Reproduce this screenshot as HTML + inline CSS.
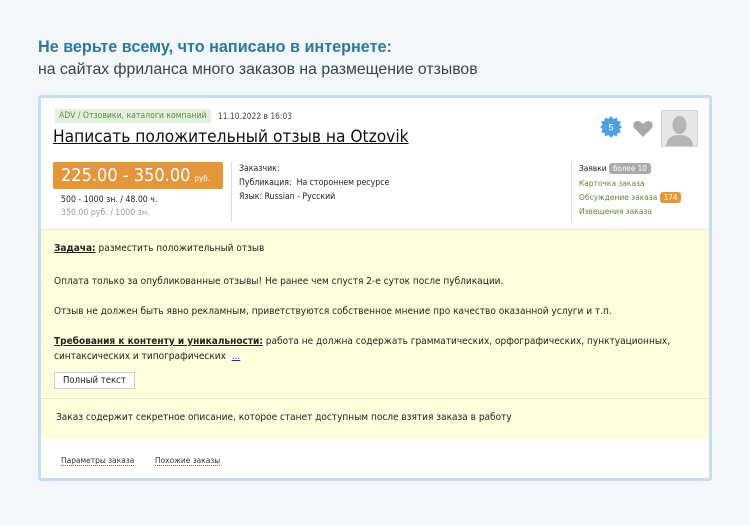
<!DOCTYPE html>
<html><head><meta charset="utf-8"><style>
*{margin:0;padding:0;box-sizing:border-box}
body{width:750px;height:525px;background:#f3f7fa;font-family:"DejaVu Sans Condensed","DejaVu Sans","Liberation Sans",sans-serif;font-stretch:condensed;position:relative;overflow:hidden;color:#222}
.h1{position:absolute;left:38px;top:38px;font:bold 16.2px "Liberation Sans",sans-serif;color:#2a7aa0}
.h2{position:absolute;left:38px;top:61px;font:15.8px "Liberation Sans",sans-serif;color:#34434e}
.card{position:absolute;left:38px;top:95px;width:674px;height:386px;border:3px solid #c5ddf2;border-radius:3px;background:#fff}
.a{position:absolute;white-space:nowrap}
.s{font-size:8.7px}
.r{font-size:8.3px}
.t{font-size:10px}
.tag{left:14px;top:11px;background:#e3f2dc;color:#5d8a4a;padding:2px 4px;font-size:8.6px}
.date{left:177px;top:13px;font-size:8.4px;color:#444}
.title{left:12px;top:29px;font-size:17.2px;text-decoration:underline;color:#111}
.price{left:12px;top:64px;width:170px;height:27px;background:#e3963a;border-radius:2px;color:#fff;font-size:18px;padding:3px 0 0 8px}
.price small{font-size:8px;margin-left:4px}
.sep{position:absolute;width:1px;background:#ddd}
.green{color:#5b8a3a}
.badge{display:inline-block;padding:0 4px;border-radius:3px;color:#fff;font-size:8px;line-height:11px}
.yellow{position:absolute;left:0;top:131px;width:668px;height:210px;background:#fefedc;border-top:1px solid #e8e8d0}
.u{text-decoration:underline;font-weight:bold}
.btn{left:13px;top:142px;border:1px solid #ccc;background:#fff;padding:2px 8px;font-size:9.5px}
.ft{font-size:8.3px;border-bottom:1px dotted #666;color:#333}
</style></head><body>
<div class="h1">Не верьте всему, что написано в интернете:</div>
<div class="h2">на сайтах фриланса много заказов на размещение отзывов</div>
<div class="card">
<div class="a tag">ADV / Отзовики, каталоги компаний</div>
<div class="a date">11.10.2022 в 16:03</div>
<div class="a title">Написать положительный отзыв на Otzovik</div>
<svg class="a" style="left:559px;top:18px" width="22" height="22" viewBox="0 0 22 22"><polygon fill="#4aa3e0" points="11,0 13.5,3 17,1.5 17.5,5 21,5.5 19.5,9 22,11 19.5,13 21,16.5 17.5,17 17,20.5 13.5,19 11,22 8.5,19 5,20.5 4.5,17 1,16.5 2.5,13 0,11 2.5,9 1,5.5 4.5,5 5,1.5 8.5,3"/><text x="11" y="14.5" font-size="9" fill="#fff" text-anchor="middle" font-family="Liberation Sans">5</text></svg>
<svg class="a" style="left:592px;top:22px" width="20" height="17" viewBox="0 0 20 17"><path d="M10 17 L2 9 C-1 6 0 1 4.5 1 C7 1 9 3 10 4 C11 3 13 1 15.5 1 C20 1 21 6 18 9 Z" fill="#a8a8a8"/></svg>
<div class="a" style="left:620px;top:12px;width:37px;height:37px;background:#e6e6e6;border:1px solid #d5d5d5">
<svg width="35" height="35" viewBox="0 0 35 35"><ellipse cx="17.5" cy="14" rx="7" ry="9" fill="#b5b5b5"/><path d="M4 35 C5 26 11 24 17.5 24 C24 24 30 26 31 35Z" fill="#b5b5b5"/></svg></div>
<div class="a price">225.00 - 350.00<small>руб.</small></div>
<div class="a s" style="left:20px;top:97px">500 - 1000 зн. / 48.00 ч.</div>
<div class="a s" style="left:20px;top:110px;color:#999">350.00 руб. / 1000 зн.</div>
<div class="sep" style="left:190px;top:64px;height:60px"></div>
<div class="a s" style="left:198px;top:66px">Заказчик:</div>
<div class="a s" style="left:198px;top:80px">Публикация:&nbsp; На стороннем ресурсе</div>
<div class="a s" style="left:198px;top:94px">Язык: Russian - Русский</div>
<div class="sep" style="left:530px;top:64px;height:60px"></div>
<div class="a r" style="left:538px;top:65px">Заявки <span class="badge" style="background:#aaa">более 10</span></div>
<div class="a r green" style="left:538px;top:80px">Карточка заказа</div>
<div class="a r green" style="left:538px;top:94px">Обсуждение заказа <span class="badge" style="background:#e3963a">174</span></div>
<div class="a r green" style="left:538px;top:108px">Извещения заказа</div>
<div class="yellow">
<div class="a t" style="left:13px;top:13px"><span class="u">Задача:</span> разместить положительный отзыв</div>
<div class="a t" style="left:13px;top:46px">Оплата только за опубликованные отзывы! Не ранее чем спустя 2-е суток после публикации.</div>
<div class="a t" style="left:13px;top:76px">Отзыв не должен быть явно рекламным, приветствуются собственное мнение про качество оказанной услуги и т.п.</div>
<div class="a t" style="left:13px;top:106px"><span class="u">Требования к контенту и уникальности:</span> работа не должна содержать грамматических, орфографических, пунктуационных,</div>
<div class="a t" style="left:13px;top:121px">синтаксических и типографических &nbsp;<span style="color:#22c;text-decoration:underline">...</span></div>
<div class="a btn">Полный текст</div>
<div class="a" style="left:0;top:168px;width:668px;height:1px;background:#e8e8d0"></div>
<div class="a t" style="left:15px;top:182px">Заказ содержит секретное описание, которое станет доступным после взятия заказа в работу</div>
</div>
<div class="a ft" style="left:20px;top:357px">Параметры заказа</div>
<div class="a ft" style="left:114px;top:357px">Похожие заказы</div>
</div>
</body></html>
